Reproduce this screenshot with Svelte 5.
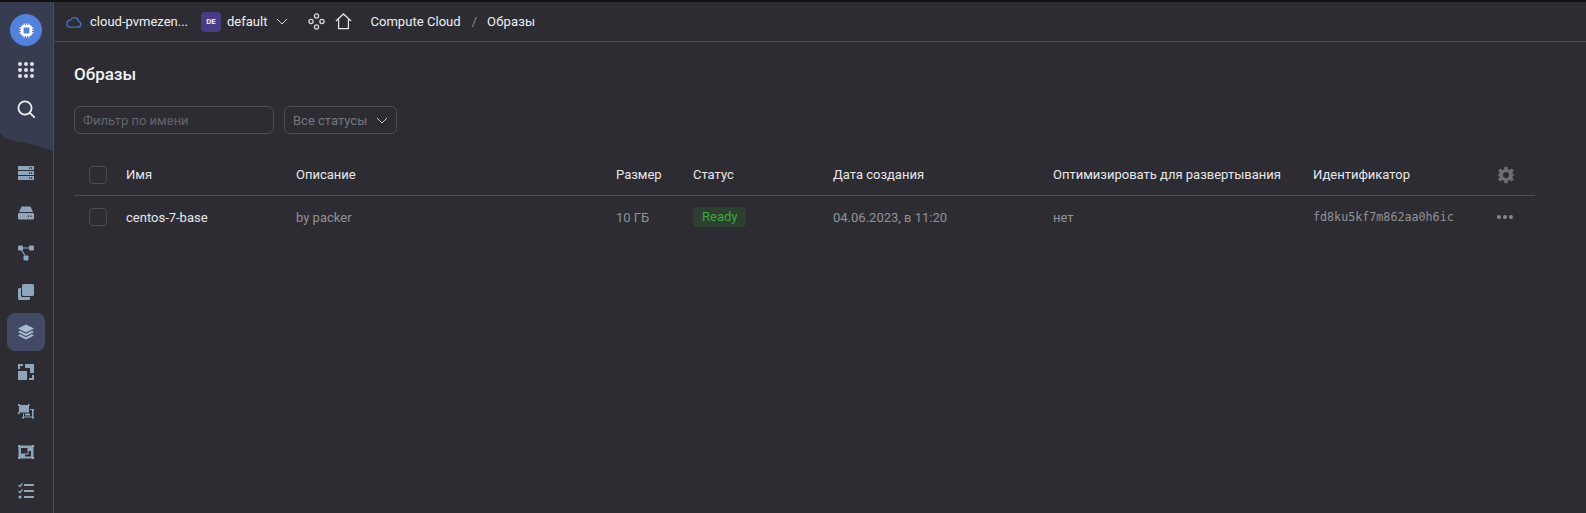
<script>
	const columns = [
		{ label: 'Имя', value: 'centos-7-base', cls: 'name' },
		{ label: 'Описание', value: 'by packer', cls: '' },
		{ label: 'Размер', value: '10 ГБ', cls: '' },
		{ label: 'Статус', value: 'Ready', cls: 'status' },
		{ label: 'Дата создания', value: '04.06.2023, в 11:20', cls: '' },
		{ label: 'Оптимизировать для развертывания', value: 'нет', cls: '' },
		{ label: 'Идентификатор', value: 'fd8ku5kf7m862aa0h6ic', cls: 'mono' }
	];
</script>

<div class="page">
	<aside class="sidebar">
		<svg class="wave" width="53" height="152" viewBox="0 0 53 152">
			<path d="M0 0H53V149C44 146 36 143 26 141C15 139 7 139 0 131Z" fill="#383c50" />
		</svg>
		<div class="top-icons">
			<div class="logo">
				<svg width="15" height="15" viewBox="0 0 16 16" fill="none" stroke="#fff">
					<rect x="3.5" y="3.5" width="9" height="9" rx="1.5" stroke-width="2.8" />
					<path d="M5.5 0.5V3M8 0.5V3M10.5 0.5V3M5.5 13V15.5M8 13V15.5M10.5 13V15.5M.5 5.5H3M.5 8H3M.5 10.5H3M13 5.5H15.5M13 8H15.5M13 10.5H15.5" stroke-width="1.2" />
				</svg>
			</div>
			<div class="top-btn">
				<svg width="16" height="16" viewBox="0 0 16 16" fill="#dfe1e8">
					<circle cx="2" cy="2" r="2" /><circle cx="8" cy="2" r="2" /><circle cx="14" cy="2" r="2" />
					<circle cx="2" cy="8" r="2" /><circle cx="8" cy="8" r="2" /><circle cx="14" cy="8" r="2" />
					<circle cx="2" cy="14" r="2" /><circle cx="8" cy="14" r="2" /><circle cx="14" cy="14" r="2" />
				</svg>
			</div>
			<div class="top-btn">
				<svg width="18" height="18" viewBox="0 0 18 18" fill="none" stroke="#eceef2" stroke-width="1.8">
					<circle cx="8" cy="8" r="6.6" /><path d="M12.8 12.8L17.2 17.2" stroke-linecap="round" />
				</svg>
			</div>
		</div>

		<nav class="nav">
			<div class="nav-item">
				<svg viewBox="0 0 16 16" fill="#8fa5bb" fill-rule="evenodd">
					<path d="M0 1H16V5H0ZM11 2.2V3.8H12.2V2.2ZM13 2.2V3.8H14.2V2.2Z" />
					<path d="M0 6H16V10H0ZM11 7.2V8.8H12.2V7.2ZM13 7.2V8.8H14.2V7.2Z" />
					<path d="M0 11H16V15H0ZM11 12.2V13.8H12.2V12.2ZM13 12.2V13.8H14.2V12.2Z" />
				</svg>
			</div>
			<div class="nav-item">
				<svg viewBox="0 0 16 16" fill="#8fa5bb">
					<path d="M3.5 1.5H12.5L15 7H1Z" />
					<path d="M1 8H15A1 1 0 0 1 16 9V13.5A1 1 0 0 1 15 14.5H1A1 1 0 0 1 0 13.5V9A1 1 0 0 1 1 8ZM10 10.5V12H11V10.5ZM12.5 10.5V12H13.5V10.5Z" fill-rule="evenodd" />
				</svg>
			</div>
			<div class="nav-item">
				<svg viewBox="0 0 16 16" fill="#8fa5bb" stroke="#8fa5bb">
					<rect x="0" y="0.5" width="5" height="5" rx="1.2" stroke="none" />
					<rect x="11" y="0.5" width="5" height="5" rx="1" stroke="none" />
					<rect x="5.5" y="10.5" width="5" height="5" rx="1" stroke="none" />
					<path d="M4 3H11M3.5 5L7 10.5" stroke-width="1.2" fill="none" />
				</svg>
			</div>
			<div class="nav-item">
				<svg viewBox="0 0 16 16" fill="#8fa5bb">
					<rect x="4" y="0" width="12" height="12" rx="1.5" />
					<path d="M0 5.5A1.5 1.5 0 0 1 1.5 4H3V11.5A1.5 1.5 0 0 0 4.5 13H12V14.5A1.5 1.5 0 0 1 10.5 16H1.5A1.5 1.5 0 0 1 0 14.5Z" />
				</svg>
			</div>
			<div class="nav-item active">
				<svg viewBox="0 0 16 16" fill="#a9bbcd">
					<path d="M8 0.5L16 4.5L8 8.5L0 4.5Z" />
					<path d="M2 6.8L8 9.8L14 6.8L16 8L8 12L0 8Z" />
					<path d="M2 10.3L8 13.3L14 10.3L16 11.5L8 15.5L0 11.5Z" />
				</svg>
			</div>
			<div class="nav-item">
				<svg viewBox="0 0 16 16" fill="#8fa5bb">
					<path d="M0 7H9V16H0ZM7 0H16V9H12V4H7ZM0 0H5V2H2V5H0ZM11 16V14H14V11H16V16Z" />
				</svg>
			</div>
			<div class="nav-item">
				<svg viewBox="0 0 16 16" fill="#8fa5bb">
					<rect x="1" y="1" width="10" height="7.5" />
					<path d="M0 0H2V1H1V2H0ZM10 0H11.5V2H11V1H10ZM0 8H1V9H2V10H0Z" />
					<path fill-rule="evenodd" d="M5 9.5H6V12.5H14V6H12V5H16V7H15.5V13H16V14.5H14V13.5H6V14.5H4V13H5Z" />
					<rect x="7" y="9.5" width="5" height="2" />
				</svg>
			</div>
			<div class="nav-item">
				<svg viewBox="0 0 16 16" fill="#8fa5bb">
					<path fill-rule="evenodd" d="M0 1H2V1.5H14V1H16V3H15.5V13H16V15H14V14.5H2V15H0V13H.5V3H0ZM3 4V9.5H9.5V4ZM10.5 7V10.5H7V12.5H13V7Z" />
				</svg>
			</div>
			<div class="nav-item">
				<svg viewBox="0 0 16 16" fill="#8fa5bb">
					<rect x="6" y="1" width="10" height="2" />
					<rect x="6" y="7" width="10" height="2" />
					<rect x="6" y="13" width="10" height="2" />
					<circle cx="2" cy="14" r="1.6" />
					<path d="M.5 2L2 3.5L4.5 .5M.5 8L2 9.5L4.5 6.5" fill="none" stroke="#8fa5bb" stroke-width="1.3" />
				</svg>
			</div>
		</nav>
	</aside>

	<main class="main">
		<header class="topbar">
			<svg class="cloud" width="16" height="12" viewBox="0 0 16 12" fill="none" stroke="#4b73c4" stroke-width="1.3">
				<path d="M3.6 11.2H12.2A3 3 0 0 0 12.6 5.3A4.2 4.2 0 0 0 4.6 4.1A3.6 3.6 0 0 0 3.6 11.2Z" />
			</svg>
			<span class="crumb cloud-name">cloud-pvmezen...</span>
			<span class="badge">DE</span>
			<span class="crumb">default</span>
			<svg class="chev" width="12" height="7" viewBox="0 0 12 7" fill="none" stroke="#d6d7da" stroke-width="1"><path d="M1 1L6 6L11 1" /></svg>
			<svg class="services" width="17" height="17" viewBox="0 0 18 18" fill="none" stroke="#d6d7da" stroke-width="1.4">
				<circle cx="9" cy="3.2" r="2.2" /><circle cx="3.2" cy="9" r="2.2" /><circle cx="14.8" cy="9" r="2.2" /><circle cx="9" cy="14.8" r="2.2" />
			</svg>
			<svg class="home" width="17" height="17" viewBox="0 0 18 18" fill="none" stroke="#e6e7e9" stroke-width="1.3">
				<path d="M1 8.5L9 1L17 8.5M3.8 7V16.5H14.2V7" />
			</svg>
			<span class="crumb compute">Compute Cloud</span>
			<span class="sep">/</span>
			<span class="crumb current">Образы</span>
		</header>

		<section class="content">
			<h1>Образы</h1>
			<div class="filters">
				<input class="filter" placeholder="Фильтр по имени" />
				<div class="select">
					<span>Все статусы</span>
					<svg width="12" height="7" viewBox="0 0 12 7" fill="none" stroke="#c6c7ca" stroke-width="1"><path d="M1 1L6 6L11 1" /></svg>
				</div>
			</div>

			<div class="table">
				<div class="row head">
					<span class="check"></span>
					{#each columns as col}
						<span class="cell">{col.label}</span>
					{/each}
					<svg class="gear" width="18" height="18" viewBox="0 0 24 24" fill="#6d6e74">
						<path fill-rule="evenodd" d="M10 1H14L14.6 4.2L16.9 5.2L19.6 3.3L22.4 6.1L20.5 8.8L21.5 11.1L23.5 11.7V12.3L21.5 13L20.5 15.2L22.4 17.9L19.6 20.7L16.9 18.8L14.6 19.8L14 23H10L9.4 19.8L7.1 18.8L4.4 20.7L1.6 17.9L3.5 15.2L2.5 13L.5 12.3V11.7L2.5 11.1L3.5 8.8L1.6 6.1L4.4 3.3L7.1 5.2L9.4 4.2ZM12 8A4 4 0 1 0 12 16A4 4 0 1 0 12 8Z" />
					</svg>
				</div>
				<div class="row body">
					<span class="check"></span>
					{#each columns as col}
						<span class="cell {col.cls}">
							{#if col.cls === 'status'}
								<span class="pill">{col.value}</span>
							{:else}
								{col.value}
							{/if}
						</span>
					{/each}
					<span class="dots"><i></i><i></i><i></i></span>
				</div>
			</div>
		</section>
	</main>
</div>

<style>
	:global(body) {
		margin: 0;
		background: #2d2c33;
		overflow: hidden;
	}

	.page {
		display: flex;
		height: 513px;
		border-top: 2px solid #111114;
		box-sizing: border-box;
		font-family: Roboto, "Noto Sans", sans-serif;
		font-size: 13px;
		color: #e8e8ea;
	}

	.sidebar {
		position: relative;
		width: 53px;
		flex: none;
		border-right: 1px solid #4c4c52;
	}

	.wave {
		position: absolute;
		top: 0;
		left: 0;
	}

	.top-icons {
		position: relative;
		display: flex;
		flex-direction: column;
		align-items: center;
		padding: 12px 1px 0 0;
	}

	.logo {
		width: 32px;
		height: 32px;
		border-radius: 50%;
		background: #5282dc;
		display: flex;
		align-items: center;
		justify-content: center;
	}

	.top-btn {
		height: 39px;
		display: flex;
		align-items: center;
		justify-content: center;
	}

	.top-btn:nth-child(2) {
		margin-top: 4px;
	}

	.nav {
		position: absolute;
		top: 152px;
		left: 0;
		width: 52px;
		display: flex;
		flex-direction: column;
		align-items: center;
	}

	.nav-item {
		width: 38px;
		height: 38px;
		margin-bottom: 1.8px;
		border-radius: 8px;
		display: flex;
		align-items: center;
		justify-content: center;
	}

	.nav-item svg {
		width: 16px;
		height: 16px;
	}

	.nav-item.active {
		background: #434a66;
	}

	.main {
		flex: 1;
		min-width: 0;
	}

	.topbar {
		height: 39px;
		border-bottom: 1px solid #4c4c52;
		display: flex;
		align-items: center;
		padding-left: 12px;
		color: #f0f0f2;
	}

	.cloud {
		margin-right: 8px;
	}

	.cloud-name {
		width: 111px;
	}

	.badge {
		width: 20px;
		height: 20px;
		border-radius: 4px;
		background: #483d85;
		font-size: 8px;
		font-weight: 700;
		display: flex;
		align-items: center;
		justify-content: center;
		margin-right: 6px;
	}

	.chev {
		margin-left: 9px;
	}

	.services {
		margin-left: 20px;
	}

	.home {
		margin-left: 10px;
	}

	.compute {
		margin-left: 18px;
		letter-spacing: 0.05px;
	}

	.sep {
		color: #8c8c90;
		margin: 0 10px 0 11px;
	}

	.current {
		letter-spacing: 0.2px;
	}

	.content {
		padding: 0 51px 0 20px;
	}

	h1 {
		margin: 22px 0 0;
		font-size: 17px;
		line-height: 20px;
		font-weight: 500;
		color: #f2f2f4;
	}

	.filters {
		display: flex;
		gap: 10px;
		margin-top: 22px;
	}

	.filter,
	.select {
		box-sizing: border-box;
		height: 28px;
		border: 1px solid #4c4c52;
		border-radius: 6px;
		background: none;
		font: inherit;
		color: #77777c;
	}

	.filter {
		width: 200px;
		padding: 0 8px;
		outline: none;
	}

	.filter::placeholder {
		color: #646469;
		opacity: 1;
	}

	.select {
		width: 113px;
		padding: 0 8px;
		display: flex;
		align-items: center;
		justify-content: space-between;
	}

	.table {
		margin-top: 20px;
	}

	.row {
		display: grid;
		grid-template-columns: 52px 170px 320px 77px 140px 220px 260px 184px 38px;
		align-items: center;
	}

	.head {
		height: 41px;
		border-bottom: 1px solid #4c4c52;
		color: #e8e8ea;
	}

	.body {
		height: 42px;
		color: #929297;
	}

	.check {
		width: 16px;
		height: 16px;
		margin-left: 15px;
		border: 1px solid #4c4c52;
		border-radius: 4px;
	}

	.cell.name {
		color: #e8e8ea;
	}

	.cell.mono {
		font-family: "DejaVu Sans Mono", monospace;
		font-size: 11.7px;
	}

	.pill {
		display: inline-block;
		padding: 0 9px;
		height: 20px;
		line-height: 20px;
		border-radius: 4px;
		background: #2c3f30;
		color: #3fa73f;
	}

	.gear {
		justify-self: start;
	}

	.dots {
		display: flex;
		gap: 2px;
	}

	.dots i {
		width: 4px;
		height: 4px;
		border-radius: 50%;
		background: #88888d;
	}
</style>
